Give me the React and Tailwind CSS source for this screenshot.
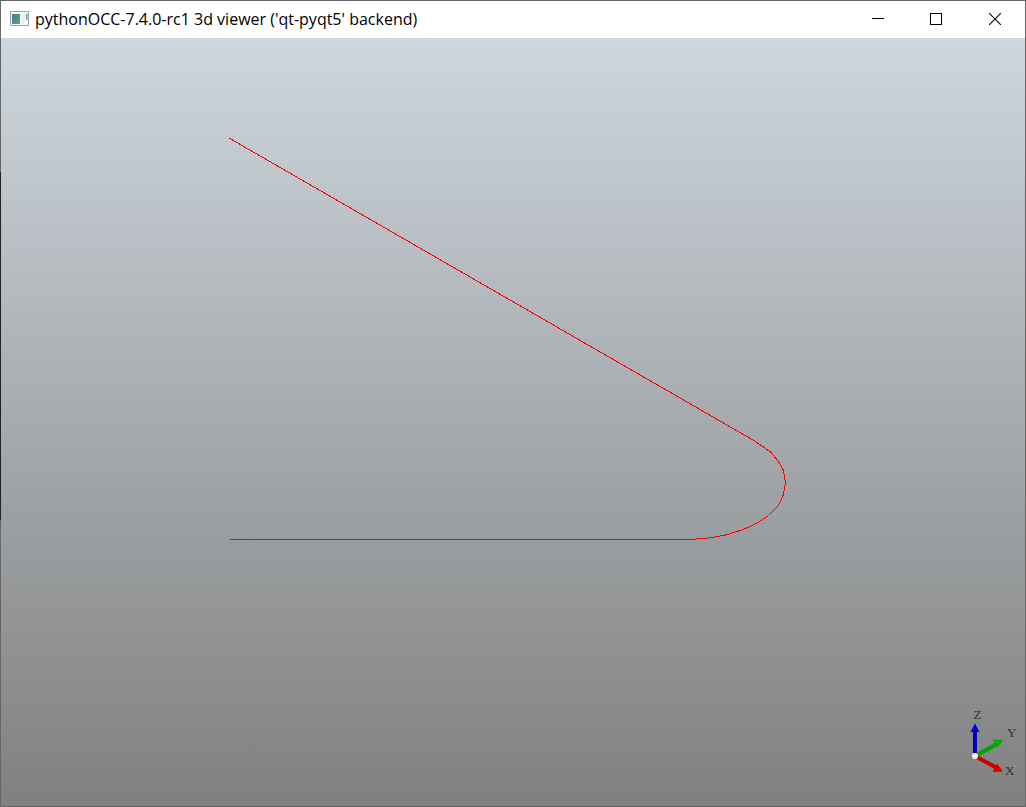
import React from 'react';

// Edges of the filleted wire, in canvas pixels
const WIRE_POINTS = [
  [229, 99.8],
  [755, 403],
  [770, 413.5],
  [778, 423],
  [783, 432],
  [785, 444],
  [783, 456],
  [778, 467],
  [768, 477],
  [756, 485],
  [742, 491.3],
  [725, 496.5],
  [710, 499.3],
  [690, 501],
  [229.2, 501],
];

function AppIcon() {
  return (
    <svg className="h-4 w-5 shrink-0" viewBox="0 0 20 16">
      <defs>
        <linearGradient id="screen" x1="0" y1="0" x2="1" y2="1">
          <stop offset="0" stopColor="#4777a5" />
          <stop offset="1" stopColor="#5bab70" />
        </linearGradient>
        <linearGradient id="gauge" x1="0" y1="0" x2="0" y2="1">
          <stop offset="0" stopColor="#4f86a5" />
          <stop offset="1" stopColor="#7cc08c" />
        </linearGradient>
      </defs>
      <rect x="0.5" y="0.5" width="18" height="14" fill="#f7f8f9" stroke="#9da3a7" />
      <rect x="2" y="3" width="8" height="10" fill="url(#screen)" />
      <rect x="11" y="3" width="4" height="10" fill="#edf0f1" />
      <rect x="16" y="3" width="1.5" height="6" fill="url(#gauge)" />
    </svg>
  );
}

function TitleBar() {
  return (
    <header className="flex h-[37px] shrink-0 items-center bg-white pb-px pl-[9px] text-black">
      <AppIcon />
      <h1 className="ml-[5px] grow whitespace-nowrap font-[family-name:'Open_Sans','Noto_Sans',sans-serif] text-[16px] leading-5">
        pythonOCC-7.4.0-rc1 3d viewer ('qt-pyqt5' backend)
      </h1>
      <div className="flex h-full">
        <button aria-label="Minimize" className="flex w-[58px] items-center justify-center">
          <svg className="h-3 w-3" viewBox="0 0 12 12" shapeRendering="crispEdges">
            <rect y="5" width="12" height="1" />
          </svg>
        </button>
        <button aria-label="Maximize" className="flex w-[58px] items-center justify-center">
          <svg className="h-3 w-3" viewBox="0 0 12 12" shapeRendering="crispEdges">
            <rect x="0.5" y="0.5" width="11" height="11" fill="none" stroke="currentColor" />
          </svg>
        </button>
        <button aria-label="Close" className="flex w-[60px] items-center justify-center">
          <svg className="h-3 w-3" viewBox="0 0 12 12">
            <path d="M0 0L12 12M12 0L0 12" fill="none" stroke="currentColor" strokeWidth="1.1" />
          </svg>
        </button>
      </div>
    </header>
  );
}

// Orientation marker in the lower right corner of the view
function AxisTrihedron() {
  return (
    <g>
      <path d="M975 718V692" stroke="#0000bd" strokeWidth="4" />
      <path d="M970.5 694L975 685.5L979.5 694Z" fill="#0000d8" />
      <path d="M975 718L997 706" stroke="#00a300" strokeWidth="4" />
      <path d="M992.5 701.5L1003 702L997.5 710Z" fill="#00aa08" />
      <path d="M975 718L997 730" stroke="#c90000" strokeWidth="4" />
      <path d="M997 725.5L1003 733.5L992.5 734Z" fill="#dd0000" />
      <circle cx="975" cy="718" r="3" fill="#f4f4f4" />
      <g className="font-[family-name:'Liberation_Serif',serif] text-[13px]" fill="#303030">
        <text x="973.5" y="681">Z</text>
        <text x="1007" y="699">Y</text>
        <text x="1005" y="737">X</text>
      </g>
    </g>
  );
}

function Viewer() {
  return (
    <main className="min-h-0 grow bg-linear-to-b from-[#ced7de] to-[#808080]">
      <svg className="-ml-px block" width="1025" height="768" viewBox="0 0 1025 768">
        <polyline
          points={WIRE_POINTS.map((p) => p.map((v) => v + 0.5).join(',')).join(' ')}
          fill="none"
          stroke="#ff0000"
          shapeRendering="crispEdges"
        />
        <AxisTrihedron />
      </svg>
    </main>
  );
}

export default function App() {
  return (
    <div className="flex h-[807px] w-[1026px] flex-col overflow-hidden border border-l-0 border-[#666668] bg-[linear-gradient(#666668_171px,#222224_171px,#222224_519px,#666668_519px)] pl-px">
      <TitleBar />
      <Viewer />
    </div>
  );
}
